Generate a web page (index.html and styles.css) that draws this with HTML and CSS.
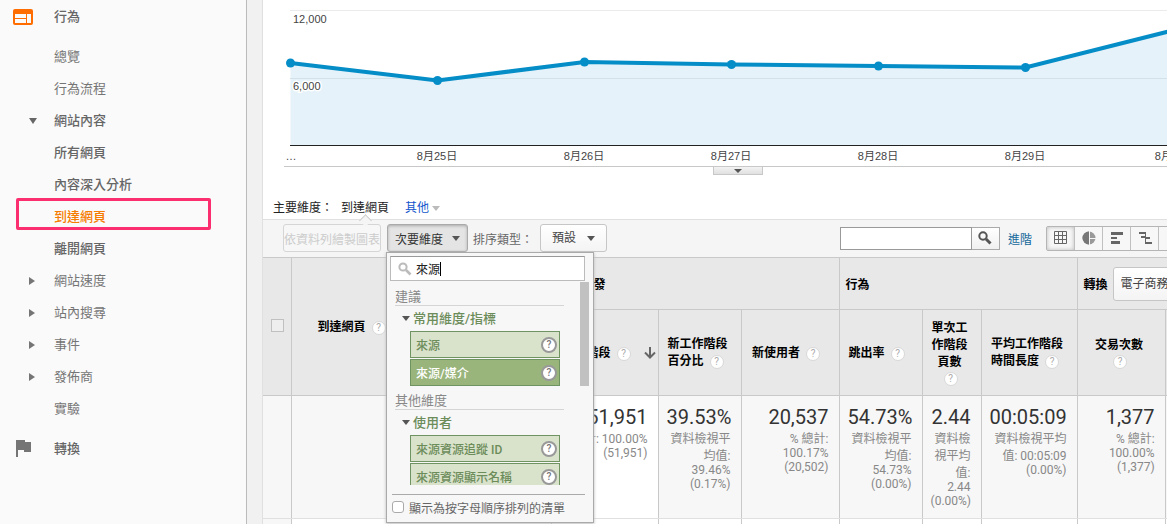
FILE: index.html
```html
<!DOCTYPE html>
<html lang="zh-Hant">
<head>
<meta charset="utf-8">
<title>到達網頁</title>
<link rel="stylesheet" href="styles.css">
</head>
<body>
<div class="app">
  <nav class="sidebar">
    <a class="section" href="#">
      <svg class="section-icon active" width="20" height="16" viewBox="0 0 20 16"><path fill="currentColor" fill-rule="evenodd" d="M2 0h16a2 2 0 0 1 2 2v12a2 2 0 0 1-2 2H2a2 2 0 0 1-2-2V2a2 2 0 0 1 2-2zM2 5v4h11V5zM2 10v4h11v-4zM14 5v9h4V5z"/></svg>
      <span>行為</span>
    </a>
    <ul class="nav-list">
      <li><a href="#">總覽</a></li>
      <li><a href="#">行為流程</a></li>
      <li class="group open"><a href="#">網站內容</a></li>
      <li class="sub"><a href="#">所有網頁</a></li>
      <li class="sub"><a href="#">內容深入分析</a></li>
      <li class="sub current"><a href="#">到達網頁</a></li>
      <li class="sub"><a href="#">離開網頁</a></li>
      <li class="group"><a href="#">網站速度</a></li>
      <li class="group"><a href="#">站內搜尋</a></li>
      <li class="group"><a href="#">事件</a></li>
      <li class="group"><a href="#">發佈商</a></li>
      <li><a href="#">實驗</a></li>
    </ul>
    <a class="section" href="#">
      <svg class="section-icon" width="20" height="18" viewBox="0 0 20 18"><path fill="currentColor" d="M3 0h9v2h6v10h-7v-2H5v7H3z"/></svg>
      <span>轉換</span>
    </a>
  </nav>

  <main class="panel">
    <div class="chart">
      <svg class="chart-svg" width="100%" height="166">
        <line class="grid" x1="27" x2="100%" y1="10.500" y2="10.500"/>
        <path class="area" d="M27.500 63L174.500 80.500L321.500 62L468.500 64.500L615.500 66L762.500 67.500L909.500 30.500V145H27.500z"/>
        <line class="grid over" x1="27" x2="100%" y1="78.500" y2="78.500"/>
        <path class="series" d="M27.500 63L174.500 80.500L321.500 62L468.500 64.500L615.500 66L762.500 67.500L909.500 30.500"/>
        <g class="dots"><circle cx="27.500" cy="63" r="4.500"/><circle cx="174.500" cy="80.500" r="4.500"/><circle cx="321.500" cy="62" r="4.500"/><circle cx="468.500" cy="64.500" r="4.500"/><circle cx="615.500" cy="66" r="4.500"/><circle cx="762.500" cy="67.500" r="4.500"/><circle cx="909.500" cy="30.500" r="4.500"/></g>
        <line class="axis" x1="27" x2="100%" y1="145.500" y2="145.500"/>
        <g class="y-labels"><text x="30" y="23">12,000</text><text x="30" y="90">6,000</text></g>
        <g class="x-labels"><text x="28" y="160">…</text><text x="174" y="160">8月25日</text><text x="321" y="160">8月26日</text><text x="468" y="160">8月27日</text><text x="615" y="160">8月28日</text><text x="762" y="160">8月29日</text><text x="912" y="160">8月30日</text></g>
      </svg>
      <div class="chart-foot"><button class="chart-toggle" type="button" aria-label="展開"><span class="caret small"></span></button></div>
    </div>

    <div class="dimensions">
      <span>主要維度：</span>
      <a class="dim-current" href="#">到達網頁</a>
      <a class="dim-other" href="#">其他<span class="caret light"></span></a>
    </div>

    <div class="toolbar">
      <button class="btn plot" type="button" disabled>依資料列繪製圖表</button>
      <div class="picker">
        <button class="btn pressed" type="button">次要維度<span class="caret"></span></button>
        <div class="menu">
          <label class="menu-search">
            <svg width="14" height="14" viewBox="0 0 14 14" fill="none" stroke="currentColor"><circle cx="5" cy="5" r="3.600" stroke-width="2"/><path d="M8 8l4.500 4.500" stroke-width="2.600"/></svg>
            <input type="text" value="來源" aria-label="搜尋維度">
            <i class="text-cursor"></i>
          </label>
          <div class="menu-scroll">
            <div class="menu-list">
              <h3>建議</h3>
              <h4><span class="caret"></span>常用維度/指標</h4>
              <ul>
                <li><button type="button">來源<span class="help ring">?</span></button></li>
                <li><button class="chosen" type="button">來源/媒介<span class="help ring">?</span></button></li>
              </ul>
              <h3>其他維度</h3>
              <h4><span class="caret"></span>使用者</h4>
              <ul>
                <li><button type="button">來源資源追蹤 ID<span class="help ring">?</span></button></li>
                <li><button type="button">來源資源顯示名稱<span class="help ring">?</span></button></li>
              </ul>
            </div>
            <div class="menu-thumb"></div>
          </div>
          <label class="menu-foot"><input class="check round" type="checkbox">顯示為按字母順序排列的清單</label>
        </div>
      </div>
      <label class="sort-label" for="sort">排序類型：</label>
      <span class="select"><select class="btn" id="sort"><option>預設</option></select><span class="caret"></span></span>

      <div class="tools">
        <div class="search">
          <input type="text" aria-label="搜尋">
          <button type="button" aria-label="搜尋"><svg width="14" height="14" viewBox="0 0 14 14" fill="none" stroke="currentColor"><circle cx="5" cy="5" r="3.700" stroke-width="2"/><path d="M8 8l4.500 4.500" stroke-width="3"/></svg></button>
        </div>
        <a class="advanced" href="#">進階</a>
        <div class="views">
          <button class="on" type="button" aria-label="表格"><svg width="14" height="14" viewBox="0 0 14 14"><path fill="none" stroke="currentColor" d="M.5.5h12v12H.5zM4.500.5v12M8.500.5v12M.5 4.500h12M.5 8.500h12"/></svg></button>
          <button type="button" aria-label="百分比"><svg width="14" height="14" viewBox="0 0 14 14"><circle cx="7" cy="7" r="6.500" fill="#999"/><path d="M7 .5a6.500 6.500 0 0 0 0 13" fill="#777"/><path d="M7.500 0v14M7.500 7.500H14" stroke="#f5f5f5" fill="none"/></svg></button>
          <button type="button" aria-label="效能"><svg width="14" height="14" viewBox="0 0 14 14"><path fill="currentColor" d="M1 1h12v3H1zM1 6h6v2H1zM1 10h9v3H1z"/></svg></button>
          <button type="button" aria-label="比較"><svg width="14" height="14" viewBox="0 0 14 14"><path fill="currentColor" d="M1 1h6v2H1zM3 5h4v2H3zM7 6h5v2H7zM7 11h7v2H7zM7 1h1v12H7z"/></svg></button>
          <button type="button" aria-label="字詞雲"><svg width="14" height="14" viewBox="0 0 14 14"><path fill="currentColor" d="M1 1h3v2H1zM5 1h8v2H5zM1 4h6v2H1zM8 4h5v2H8zM1 7h3v2H1zM5 7h8v2H5zM1 10h8v2H1z"/></svg></button>
          <button type="button" aria-label="樞紐"><svg width="14" height="14" viewBox="0 0 14 14"><path fill="currentColor" d="M1 1h12v3H1zM1 5h3v8H1z"/></svg></button>
        </div>
      </div>
    </div>

    <table class="report">
      <colgroup><col class="c-check"><col class="c-page"><col class="c-sessions"><col class="c-new"><col class="c-users"><col class="c-bounce"><col class="c-pages"><col class="c-time"><col class="c-trans"><col></colgroup>
      <thead>
        <tr class="groups">
          <th rowspan="2"><input class="check" type="checkbox" aria-label="全選"></th>
          <th class="page" rowspan="2">到達網頁<span class="help">?</span></th>
          <th colspan="3">客戶開發</th>
          <th colspan="3">行為</th>
          <th colspan="2"><div class="conv"><label for="goal">轉換</label><span class="select"><select class="btn goal" id="goal"><option>電子商務</option></select><span class="caret"></span></span></div></th>
        </tr>
        <tr class="metrics">
          <th class="sorted"><div class="sort-head"><span>工作階段<span class="help">?</span></span><svg width="12" height="12" viewBox="0 0 12 12"><path d="M6 0v10M1 5.500l5 5 5-5" fill="none" stroke="#666" stroke-width="2"/></svg></div></th>
          <th>新工作階段百分比<span class="help">?</span></th>
          <th>新使用者<span class="help">?</span></th>
          <th>跳出率<span class="help">?</span></th>
          <th>單次工作階段頁數<span class="help">?</span></th>
          <th>平均工作階段時間長度<span class="help">?</span></th>
          <th>交易次數<span class="help">?</span></th>
          <th></th>
        </tr>
      </thead>
      <tbody>
        <tr class="totals">
          <td></td>
          <td></td>
          <td class="sessions"><strong>51,951</strong>% 總計: 100.00% (51,951)</td>
          <td><strong>39.53%</strong>資料檢視平均值: 39.46% (0.17%)</td>
          <td><strong>20,537</strong>% 總計: 100.17% (20,502)</td>
          <td><strong>54.73%</strong>資料檢視平均值: 54.73% (0.00%)</td>
          <td><strong>2.44</strong>資料檢視平均值: 2.44 (0.00%)</td>
          <td><strong>00:05:09</strong>資料檢視平均值: 00:05:09 (0.00%)</td>
          <td><strong>1,377</strong>% 總計: 100.00% (1,377)</td>
          <td></td>
        </tr>
        <tr class="row"><td></td><td></td><td></td><td></td><td></td><td></td><td></td><td></td><td></td><td></td></tr>
      </tbody>
    </table>
  </main>
</div>
</body>
</html>
```

FILE: styles.css
```css
* { box-sizing: border-box; }

body {
  margin: 0;
  font: 12px Roboto, "Noto Sans CJK TC", sans-serif;
  color: #222;
}

a { color: inherit; text-decoration: none; }
ul { list-style: none; margin: 0; padding: 0; }
button, input, select { font: inherit; color: inherit; margin: 0; }

.app {
  display: flex;
  height: 100vh;
  overflow: hidden;
  background: #f1f1f1;
}

/* Sidebar */
.sidebar {
  flex: 0 0 247px;
  padding-top: 1px;
  background: #fafafa;
  border-right: 1px solid #bbb;
  color: #757575;
  font-size: 13px;
  line-height: 32px;
}
.section {
  display: flex;
  align-items: center;
  gap: 21px;
  padding-left: 13px;
  font-weight: 500;
  color: #666;
}
.section-icon { color: #757575; }
.section-icon.active { color: #ff6d00; }
.nav-list { padding: 8px 0; }
.nav-list li { position: relative; padding-left: 54px; }
.nav-list .sub, .nav-list .open { font-weight: 500; color: #666; }
.nav-list .group::before {
  content: "";
  position: absolute;
  left: 29px;
  top: 12px;
  border-left: 6px solid #757575;
  border-top: 4px solid transparent;
  border-bottom: 4px solid transparent;
}
.nav-list .open::before {
  border-top: 6px solid #666;
  border-left: 4px solid transparent;
  border-right: 4px solid transparent;
  border-bottom: 0;
  top: 13px;
}
.nav-list .current { color: #f57c00; }
.nav-list .current::after {
  content: "";
  position: absolute;
  inset: -3px 35px 3px 16px;
  border: 3px solid #fb2f70;
  border-radius: 2px;
}

/* Report panel */
.panel {
  flex: 1;
  min-width: 0;
  margin-left: 15px;
  overflow: hidden;
  background: #fff;
  border-left: 1px solid #e0e0e0;
}

.chart-svg { display: block; font: 11px "Liberation Sans", "Noto Sans CJK TC", sans-serif; }
.grid { stroke: #ebebeb; }
.grid.over { stroke: #d3e1e8; }
.area { fill: #e5f2f9; }
.series { fill: none; stroke: #058dc7; stroke-width: 4; }
.dots { fill: #058dc7; }
.axis { stroke: #222; }
.y-labels text { fill: #444; stroke: #fff; stroke-width: 3; paint-order: stroke; }
.x-labels text { fill: #444; text-anchor: middle; }
.chart-foot {
  display: flex;
  justify-content: center;
  min-width: 908px;
  margin-left: 21px;
  height: 32px;
  border-top: 1px solid #c8c8c8;
}
.chart-toggle {
  display: flex;
  align-items: center;
  justify-content: center;
  width: 50px;
  height: 8px;
  padding: 0;
  border: 1px solid #c8c8c8;
  border-top: 0;
  background: linear-gradient(#f3f3f3, #e0e0e0);
}

.caret {
  display: inline-block;
  border-top: 5px solid #555;
  border-left: 4px solid transparent;
  border-right: 4px solid transparent;
}
.caret.small { border-top-width: 4px; }
.caret.light { border-top-color: #bbb; margin-left: 3px; vertical-align: 1px; }

.dimensions {
  display: flex;
  padding: 0 10px;
  line-height: 20px;
  height: 21px;
}
.dim-current { position: relative; margin-left: 8px; }
.dim-current::after {
  content: "";
  position: absolute;
  left: 20px;
  top: 18px;
  width: 8px;
  height: 8px;
  border: 1px solid #ccc;
  border-right: 0;
  border-bottom: 0;
  background: #f5f5f5;
  transform: rotate(45deg);
}
.dim-other { margin-left: 16px; color: #15c; }

/* Toolbar */
.toolbar {
  display: flex;
  align-items: center;
  min-width: 987px;
  height: 38px;
  padding: 0 34px 1px 20px;
  background: #f5f5f5;
  border-top: 1px solid #e0e0e0;
}
.btn {
  display: flex;
  align-items: center;
  height: 28px;
  padding: 0 7px;
  border: 1px solid #c6c6c6;
  border-radius: 3px;
  background: linear-gradient(#fff, #f4f4f4);
  color: #444;
  white-space: nowrap;
}
.btn .caret { margin-left: 9px; }
.plot { padding: 0; background: #f7f7f7; color: #ccc; border-color: #d5d5d5; }
.picker { position: relative; margin: 0 5px 0 6px; }
.pressed {
  background: #e4e4e4;
  border-color: #aaa;
  color: #333;
  box-shadow: inset 0 1px 3px #aaa;
}
.sort-label { color: #666; }
.select { position: relative; display: inline-block; margin-left: 7px; }
.select select { appearance: none; padding: 0 29px 0 11px; }
.select .caret { position: absolute; right: 12px; top: 12px; pointer-events: none; }

.tools { display: flex; align-items: center; margin-left: auto; }
.search { display: flex; height: 23px; color: #555; }
.search input { width: 132px; border: 1px solid #999; background: #fff; }
.search button {
  width: 28px;
  padding: 0;
  border: 1px solid #aaa;
  border-left: 0;
  background: linear-gradient(#fff, #f0f0f0);
}
.search svg { display: block; margin: auto; }
.advanced { margin: 0 14px 0 8px; color: #15699c; }
.views { display: flex; color: #666; border: 1px solid #b5b5b5; border-radius: 2px; }
.views button {
  display: flex;
  align-items: center;
  justify-content: center;
  width: 28px;
  height: 23px;
  padding: 0;
  border: 0;
  border-right: 1px solid #c0c0c0;
  background: #f7f7f7;
}
.views .on { box-shadow: inset 0 0 4px #bbb; }

/* Secondary dimension menu */
.menu {
  position: absolute;
  z-index: 2;
  left: -1px;
  top: 28px;
  width: 208px;
  padding: 3px;
  background: #f7f7f7;
  border: 1px solid #aaa;
  box-shadow: 0 1px 3px #bbb;
}
.menu-search {
  display: flex;
  align-items: center;
  width: 195px;
  height: 25px;
  padding-left: 7px;
  border: 1px solid #bbb;
  border-top-color: #999;
  background: #fff;
  color: #bbb;
}
.menu-search input {
  width: 24px;
  margin-left: 4px;
  padding: 0;
  border: 0;
  outline: 0;
  background: none;
  color: #222;
}
.text-cursor { width: 1px; height: 14px; background: #000; }
.menu-scroll { display: flex; height: 204px; overflow: hidden; }
.menu-list { flex: 1; padding: 7px 16px 0 5px; }
.menu-thumb { width: 9px; height: 104px; margin-right: 1px; margin-top: 1px; background: #c1c1c1; }
.menu h3 {
  margin: 0 0 4px;
  border-bottom: 1px solid #d5d5d5;
  color: #888;
  font-size: 13px;
  font-weight: 400;
  line-height: 17px;
}
.menu h4 {
  margin: 0 0 3px;
  color: #6c8c5a;
  font-size: 13px;
  font-weight: 500;
  line-height: 18px;
}
.menu h4 .caret { margin: 0 3px 0 7px; vertical-align: 2px; }
.menu ul { padding: 0 4px 5px 15px; }
.menu li { margin-bottom: 1px; }
.menu li button {
  display: flex;
  align-items: center;
  justify-content: space-between;
  width: 100%;
  height: 27px;
  padding: 0 2px 0 5px;
  border: 1px solid #6f9361;
  background: #d9e2cb;
  color: #6c8c5a;
  font-weight: 500;
}
.menu li .chosen { background: #9ab57c; color: #fff; }
.menu-foot {
  display: flex;
  align-items: center;
  gap: 5px;
  margin: 9px 5px 0 2px;
  height: 25px;
  border-top: 1px solid #aaa;
  color: #666;
  white-space: nowrap;
}
.check {
  appearance: none;
  width: 13px;
  height: 13px;
  border: 1px solid #c0c0c0;
  background: #eee;
}
.check.round { width: 12px; height: 12px; border-color: #aaa; border-radius: 3px; background: #fff; }

.help {
  display: inline-block;
  width: 14px;
  height: 14px;
  margin: 3px 4px 2px 6px;
  border: 1px solid #d8d8d8;
  border-radius: 50%;
  background: #fff;
  color: #aaa;
  font-size: 10px;
  font-weight: 400;
  line-height: 12px;
  text-align: center;
}
.help.ring {
  width: 16px;
  height: 16px;
  margin: 0;
  border: 2px solid #999;
  color: #777;
  font-weight: 500;
}

/* Data table */
.report {
  width: 100%;
  min-width: 987px;
  table-layout: fixed;
  border-collapse: collapse;
}
.c-check { width: 28px; }
.c-page { width: 260px; }
.c-sessions { width: 107px; }
.c-new { width: 83px; }
.c-users { width: 98px; }
.c-bounce { width: 83px; }
.c-pages { width: 59px; }
.c-time { width: 96px; }
.c-trans { width: 88px; }
.report th, .report td { border: 1px solid #c9c9c9; border-left-width: 0; }
.report th {
  padding: 0 12px 0 8px;
  background: #e8e8e8;
  color: #000;
  font-weight: 700;
}
.report .groups { height: 52px; }
.report .groups th { padding: 0 6px; text-align: left; }
.report .groups .page { padding-left: 26px; }
.report .groups th:first-child { padding: 0 0 0 8px; }
.report .metrics { height: 86px; }
.report .sorted { padding: 0 2px 0 11px; }
.sort-head { display: flex; align-items: center; justify-content: space-between; }
.conv { display: flex; align-items: center; }
.conv .select { margin-left: 5px; font-weight: 400; }
.conv .goal { height: 34px; padding-left: 7px; }
.conv .caret { top: 15px; }
.totals { height: 123px; }
.report .totals td {
  padding: 9px 10px 0 8px;
  vertical-align: top;
  text-align: right;
  background: #f7f7f7;
  border-bottom-color: #e0e0e0;
  color: #888;
}
.report .totals .sessions { padding-left: 4px; background: #fff; }
.totals strong { display: block; color: #333; font-size: 20px; font-weight: 400; }
.row { height: 38px; }
.row td:first-child { background: #f7f7f7; }
```
